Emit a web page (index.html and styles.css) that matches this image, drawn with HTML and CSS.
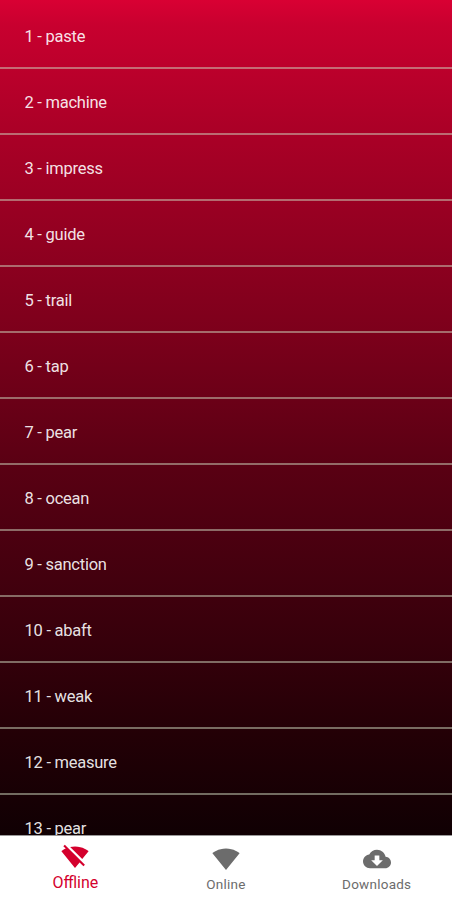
FILE: index.html
```
<!DOCTYPE html>
<html lang="en">

<head>
    <meta charset="UTF-8">
    <meta name="viewport" content="width=device-width, initial-scale=1.0">
    <title>Offline</title>
    <link rel="stylesheet" href="styles.css">
</head>

<body>
    <div class="app">
        <ul class="word-list">
            <li><span>1 - paste</span></li>
            <li><span>2 - machine</span></li>
            <li><span>3 - impress</span></li>
            <li><span>4 - guide</span></li>
            <li><span>5 - trail</span></li>
            <li><span>6 - tap</span></li>
            <li><span>7 - pear</span></li>
            <li><span>8 - ocean</span></li>
            <li><span>9 - sanction</span></li>
            <li><span>10 - abaft</span></li>
            <li><span>11 - weak</span></li>
            <li><span>12 - measure</span></li>
            <li><span>13 - pear</span></li>
        </ul>
        <nav class="tab-bar">
            <a class="tab active">
                <svg viewBox="0 0 24 24"><path d="M23.64 7c-.45-.34-4.93-4-11.64-4-1.5 0-2.89.19-4.15.48L18.18 13.8 23.64 7zm-6.6 8.22L3.27 1.44 2 2.72l2.05 2.06C1.91 5.76.59 6.82.36 7l11.63 14.49.01.01.01-.01 3.9-4.86 3.32 3.32 1.27-1.27-3.46-3.46z"/></svg>
                <span>Offline</span>
            </a>
            <a class="tab">
                <svg viewBox="0 0 24 24"><path d="M12.01 21.49L23.64 7c-.45-.34-4.93-4-11.64-4C5.28 3 .81 6.66.36 7l11.63 14.49.01.01.01-.01z"/></svg>
                <span>Online</span>
            </a>
            <a class="tab">
                <svg viewBox="0 0 24 24"><path d="M19.35 10.04C18.67 6.59 15.64 4 12 4 9.11 4 6.6 5.64 5.35 8.04 2.34 8.36 0 10.91 0 14c0 3.31 2.69 6 6 6h13c2.76 0 5-2.24 5-5 0-2.64-2.05-4.78-4.65-4.96zM17 13l-5 5-5-5h3V9h4v4h3z"/></svg>
                <span>Downloads</span>
            </a>
        </nav>
    </div>
</body>

</html>
```
FILE: styles.css
```
body {
    margin: 0;
    font-family: Roboto, sans-serif;
}

.app {
    display: flex;
    flex-direction: column;
    height: 900px;
    overflow: hidden;
}

.word-list {
    flex: 1;
    min-height: 0;
    margin: 0;
    padding: 3px 0 0;
    overflow: hidden;
    list-style: none;
    background: linear-gradient(#d90033, #c8002f 3%, #ac0027 15%, #7c001b 40%, #590013 56%, #36000b 77%, #230006 88%, #100003);
}

.word-list li {
    display: flex;
    align-items: center;
    box-sizing: border-box;
    height: 66.04px;
    padding: 2px 0 0 24.5px;
    border-bottom: 2px solid rgba(205, 215, 190, 0.5);
    color: rgba(255, 255, 255, 0.9);
    font-size: 16.5px;
    letter-spacing: -0.25px;
}

/* Bottom navigation */
.tab-bar {
    display: flex;
    height: 65px;
    border-top: 1px solid #999;
    box-sizing: border-box;
    background: #fff;
}

.tab {
    display: flex;
    flex: 1;
    flex-direction: column;
    align-items: center;
    padding-top: 9px;
    color: #6c6c6c;
    font-size: 13.5px;
    line-height: 20px;
    letter-spacing: 0.25px;
}

.tab svg {
    width: 28px;
    height: 28px;
    margin-bottom: 1px;
    fill: currentColor;
}

.tab.active {
    padding-top: 7px;
    color: #d4002d;
    font-size: 16px;
    letter-spacing: 0;
}

.tab.active svg {
    margin-bottom: 2px;
}
```
